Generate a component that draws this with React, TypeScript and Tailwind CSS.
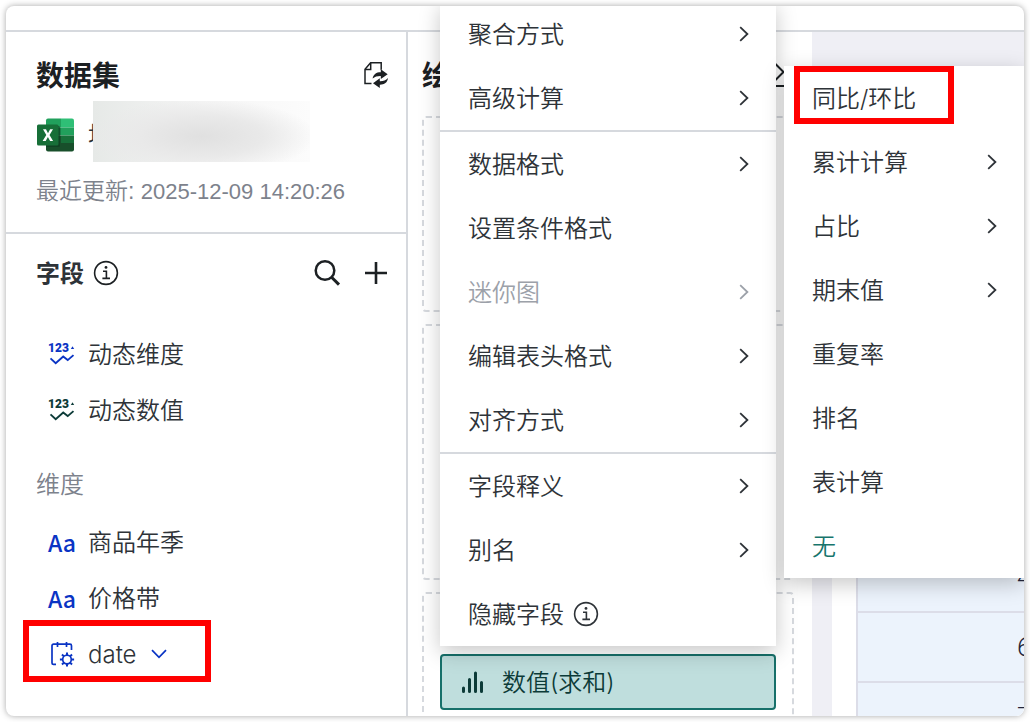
import type { ReactNode } from 'react';

const menuGroups: { label: string; arrow?: boolean; disabled?: boolean; info?: boolean; submenu?: boolean }[][] = [
  [
    { label: '聚合方式', arrow: true },
    { label: '高级计算', arrow: true, submenu: true },
  ],
  [
    { label: '数据格式', arrow: true },
    { label: '设置条件格式' },
    { label: '迷你图', arrow: true, disabled: true },
    { label: '编辑表头格式', arrow: true },
    { label: '对齐方式', arrow: true },
  ],
  [
    { label: '字段释义', arrow: true },
    { label: '别名', arrow: true },
    { label: '隐藏字段', info: true },
  ],
];

const submenuItems = [
  { label: '同比/环比', marked: true },
  { label: '累计计算', arrow: true },
  { label: '占比', arrow: true },
  { label: '期末值', arrow: true },
  { label: '重复率' },
  { label: '排名' },
  { label: '表计算' },
  { label: '无', active: true },
];

const tableValues = ['', '', '', '', '', '', '4', '6', '7'];

function ArrowRight() {
  return (
    <svg width="10" height="16" viewBox="0 0 10 16" fill="none" stroke="currentColor" strokeWidth="1.8" aria-hidden="true">
      <path d="M1.2 1.2 8.4 8 1.2 14.8" />
    </svg>
  );
}

function InfoIcon() {
  return (
    <svg width="26" height="26" viewBox="0 0 26 26" fill="none" stroke="currentColor" strokeWidth="1.6" aria-hidden="true">
      <circle cx="13" cy="13" r="11.4" />
      <path d="M10 11.2h3.4v7M9.4 18.4h7.6" />
      <circle cx="13" cy="7.4" r="1.4" fill="currentColor" stroke="none" />
    </svg>
  );
}

function ExcelIcon() {
  return (
    <svg width="38" height="34" viewBox="0 0 38 34" className="shrink-0" aria-hidden="true">
      <path d="M12 .5h13v9H10V2.500a2 2 0 0 1 2-2z" fill="#21a05c" />
      <path d="M25 .5h11a2 2 0 0 1 2 2v7H25z" fill="#2fbf76" />
      <path d="M10 9.500h15v8H10z" fill="#178048" />
      <path d="M25 9.500h13v8H25z" fill="#21a05c" />
      <path d="M10 17.500h15v7.500H10z" fill="#17502c" />
      <path d="M25 17.500h13v7.500H25z" fill="#17703a" />
      <path d="M10 25h28v6.500a2 2 0 0 1-2 2H12a2 2 0 0 1-2-2z" fill="#184f2b" />
      <path d="M10 8h12.500a1.500 1.500 0 0 1 1.500 1.500v18a1.500 1.500 0 0 1-1.500 1.500H10z" fill="#0d3f22" opacity=".7" />
      <rect x="1" y="6.500" width="21.500" height="21" rx="1.500" fill="#176f38" />
      <path d="M7 11.200h3l2 4 2.100-4h2.900l-3.500 5.900 3.600 6h-3l-2.200-4.200-2.200 4.200H6.600l3.700-6z" fill="#fff" />
    </svg>
  );
}

function SyncFileIcon() {
  return (
    <svg width="26" height="28" viewBox="0 0 26 28" fill="none" aria-hidden="true">
      <path d="M8.500 22.600H2V8.200L7.600 1.800h10.600v7" stroke="#1c2023" strokeWidth="1.500" />
      <path d="M2 8.500h5.700V2" stroke="#1c2023" strokeWidth="1.500" />
      <path d="M9.600 17.600c.8-4.600 4-6.500 8.200-6.400V8.200l6.900 5-6.900 4.800v-3c-3.300-.1-5.900.6-8.200 2.600z" fill="#1c2023" />
      <path d="M25 17c-.6 4.700-3.800 6.800-8.200 6.700v3.200L10 22.200l6.800-4.900v3c3.400.1 6-.9 8.200-3.300z" fill="#1c2023" />
    </svg>
  );
}

function NumberTrendIcon() {
  return (
    <svg width="28" height="26" viewBox="0 0 28 26" aria-hidden="true">
      <text x="0" y="11" fontSize="12" fontWeight="900" fontFamily="Roboto, sans-serif" fill="currentColor">
        123
      </text>
      <path d="M24.500 5.200 26.200 8h-3.400z" fill="currentColor" />
      <path d="m2.500 17.400 5.200 4.800 7.500-6.700 4.500 3.600 5.800-5" fill="none" stroke="currentColor" strokeWidth="1.900" />
    </svg>
  );
}

function CalendarGearIcon() {
  return (
    <svg width="28" height="28" viewBox="0 0 28 28" fill="none" stroke="currentColor" strokeWidth="1.700" aria-hidden="true">
      <path d="M8 24.400H5.500A1.500 1.500 0 0 1 4 22.900V5.700a1.500 1.500 0 0 1 1.500-1.500H22a1.500 1.500 0 0 1 1.500 1.500V10M9.500 2v5M18.500 2v5" />
      <circle cx="19" cy="19.500" r="4.300" />
      <path
        d="M19 12.400v2.600M19 24v2.600M11.900 19.500h2.600M23.500 19.500h2.600M14 14.500l1.900 1.900M22.100 22.600l1.900 1.900M14 24.500l1.900-1.900M22.100 16.400l1.900-1.900"
        strokeWidth="2"
      />
    </svg>
  );
}

function FieldRow({ icon, label, children }: { icon: ReactNode; label: string; children?: ReactNode }) {
  return (
    <li className="relative flex h-14 items-center">
      <button type="button" className="flex items-center pl-[42px] text-2xl">
        <span className="flex w-10 items-center">{icon}</span>
        <span className="pt-0.5">{label}</span>
        {children}
      </button>
    </li>
  );
}

function TextTypeIcon() {
  return <span className="font-['Noto_Sans_CJK_SC'] text-[23px] leading-8 font-medium text-[#0a34c4]">Aa</span>;
}

function Sidebar() {
  return (
    <aside className="w-[402px] shrink-0 border-r-2 border-[#d6d9de]">
      <section className="border-b-2 border-[#d6d9de] pt-[23px] pr-[17px] pb-[25px] pl-[30px]">
        <div className="flex h-10 items-center justify-between">
          <h2 className="pt-0.5 text-[28px] font-bold text-[#1c2023]">数据集</h2>
          <button type="button" aria-label="同步数据集">
            <SyncFileIcon />
          </button>
        </div>
        <div className="relative mt-1.5 flex h-[61px] items-center gap-3.5 pt-2 pb-0.5">
          <ExcelIcon />
          <span className="pt-0.5 text-2xl">地</span>
          <div className="absolute inset-y-0 left-[57px] w-[217px] bg-[#f4f4f4] bg-[radial-gradient(ellipse_at_50%_58%,#e0e0e0_0%,#e9e9e9_40%,transparent_75%),linear-gradient(to_right,#e6e9e7,#f5f5f5_50%,#fcfcfc)]" />
        </div>
        <p className="mt-[13px] h-8 font-['Liberation_Sans','Noto_Sans_CJK_SC',sans-serif] text-[22px] leading-8 whitespace-nowrap text-[#7d828c]">
          <span className="text-[23px]">最近更新: </span>2025-12-09 14:20:26
        </p>
      </section>
      <section className="pt-[19px]">
        <div className="flex h-10 items-center pr-[17px] pl-[30px]">
          <h3 className="pt-0.5 text-2xl font-bold">字段</h3>
          <span className="ml-[9px] text-[#1c2023]">
            <InfoIcon />
          </span>
          <div className="ml-auto flex items-center gap-[22px] text-[#1c2023]">
            <button type="button" aria-label="搜索">
              <svg width="28" height="28" viewBox="0 0 28 28" fill="none" stroke="currentColor" strokeWidth="2.500" aria-hidden="true">
                <circle cx="12" cy="11.500" r="9.300" />
                <path d="m18.600 18.200 7.400 7.400" strokeWidth="3" />
              </svg>
            </button>
            <button type="button" aria-label="添加">
              <svg width="26" height="26" viewBox="0 0 26 26" fill="none" stroke="currentColor" strokeWidth="2.600" aria-hidden="true">
                <path d="M13 2v22M2 13h22" />
              </svg>
            </button>
          </div>
        </div>
        <ul className="mt-[33px]">
          <FieldRow icon={<span className="text-[#0a34c4]"><NumberTrendIcon /></span>} label="动态维度" />
          <FieldRow icon={<span className="text-[#0c3b38]"><NumberTrendIcon /></span>} label="动态数值" />
        </ul>
        <h4 className="mt-[26px] flex h-10 items-center pt-0.5 pl-[30px] text-2xl text-[#7d828c]">维度</h4>
        <ul className="mt-2.5">
          <FieldRow icon={<TextTypeIcon />} label="商品年季" />
          <FieldRow icon={<TextTypeIcon />} label="价格带" />
          <FieldRow icon={<span className="text-[#0a34c4]"><CalendarGearIcon /></span>} label="date">
            <svg width="16" height="10" viewBox="0 0 16 10" fill="none" stroke="#0a34c4" strokeWidth="1.700" className="ml-3.5" aria-hidden="true">
              <path d="M1 1.200 8 8.400l7-7.200" />
            </svg>
            <span className="absolute -top-1.5 bottom-0 left-[17px] w-[188px] border-6 border-[#ff0000]" />
          </FieldRow>
        </ul>
      </section>
    </aside>
  );
}

function Submenu() {
  return (
    <ul className="absolute top-0 left-full ml-2 w-60 bg-white text-[#2e3338] shadow-[0_6px_20px_rgba(0,0,0,0.22)]">
      {submenuItems.map((item) => (
        <li key={item.label} className="relative">
          <button
            type="button"
            className={`flex h-16 w-full items-center justify-between pr-[27px] pl-7 text-2xl ${item.active ? 'text-[#17756c]' : ''}`}
          >
            <span className="pt-0.5">{item.label}</span>
            {item.arrow && <ArrowRight />}
          </button>
          {item.marked && <span className="absolute top-0 left-2.5 h-[58px] w-40 border-6 border-[#ff0000]" />}
        </li>
      ))}
    </ul>
  );
}

function FieldMenu() {
  return (
    <div className="absolute bottom-full left-0 z-10 mb-2 w-full divide-y-2 divide-[#d6d9de] bg-white shadow-[0_6px_20px_rgba(0,0,0,0.22)]">
      {menuGroups.map((group, index) => (
        <ul key={index}>
          {group.map((item) => (
            <li key={item.label} className="relative">
              <button
                type="button"
                disabled={item.disabled}
                className={`flex h-16 w-full items-center pr-[27px] pl-7 text-2xl ${item.disabled ? 'text-[#9ca1a9]' : ''}`}
              >
                <span className="pt-0.5">{item.label}</span>
                {item.info && (
                  <span className="ml-[9px]">
                    <InfoIcon />
                  </span>
                )}
                {item.arrow && (
                  <span className="ml-auto">
                    <ArrowRight />
                  </span>
                )}
              </button>
              {item.submenu && <Submenu />}
            </li>
          ))}
        </ul>
      ))}
    </div>
  );
}

function ChartPanel() {
  return (
    <section className="w-[404px] shrink-0 pt-[23px] pr-[18px] pl-3.5">
      <div className="flex h-10 items-center justify-between">
        <h2 className="pt-0.5 text-[28px] font-bold text-[#1c2023]">绘图</h2>
        <button type="button" aria-label="收起">
          <svg width="30" height="30" viewBox="0 0 30 30" fill="none" stroke="#1c2023" strokeWidth="2" aria-hidden="true">
            <path d="m11.500 4 8 8-8 8M4 26h20" />
          </svg>
        </button>
      </div>
      <div className="mt-[21px] flex flex-col gap-3">
        <div className="h-[196px] rounded border-2 border-dashed border-[#d6d9de]" />
        <div className="h-64 rounded border-2 border-dashed border-[#d6d9de]" />
        <div className="h-[196px] rounded border-2 border-dashed border-[#d6d9de] px-4 pt-[60px]">
          <div className="relative">
            <button
              type="button"
              className="flex h-14 w-full items-center rounded border-2 border-[#17706a] bg-[#bfdedd] pl-[18px] text-2xl text-[#0c3b38]"
            >
              <svg width="24" height="24" viewBox="0 0 24 24" fill="none" stroke="currentColor" strokeWidth="3" strokeLinecap="round" aria-hidden="true">
                <path d="M3.500 18v3.500M9.500 9.500v12M15.500 3v18.500M21.500 12.500v9" />
              </svg>
              <span className="ml-[18px] pt-0.5">数值(求和)</span>
            </button>
            <FieldMenu />
          </div>
        </div>
      </div>
    </section>
  );
}

function DataPreview() {
  return (
    <main className="min-w-0 flex-1 overflow-hidden bg-[#efeff5] pt-[60px] pl-5">
      <div className="h-full bg-white pt-[31px] pl-6">
        <table className="w-full border-separate border-spacing-0 border-l-2 border-[#dcdde8] bg-[#ecf3fc]">
          <tbody>
            {tableValues.map((value, index) => (
              <tr key={index}>
                <td className="h-[70px] border-b-2 border-[#dcdde8] pl-[159px] font-['Roboto'] text-[26px] leading-none text-[#23263a]">
                  <span className="block w-0">{value}</span>
                </td>
              </tr>
            ))}
          </tbody>
        </table>
      </div>
    </main>
  );
}

export default function App() {
  return (
    <div className="h-screen bg-white p-1.5 font-['Inter','Noto_Sans_CJK_SC',sans-serif] font-[350] text-[#2e3338]">
      <div className="flex h-full flex-col overflow-hidden rounded-lg bg-white shadow-[0_0_6px_rgba(0,0,0,0.35)]">
        <header className="h-[26px] shrink-0 border-b-2 border-[#d6d9de]" />
        <div className="flex min-h-0 flex-1">
          <Sidebar />
          <ChartPanel />
          <DataPreview />
        </div>
      </div>
    </div>
  );
}
